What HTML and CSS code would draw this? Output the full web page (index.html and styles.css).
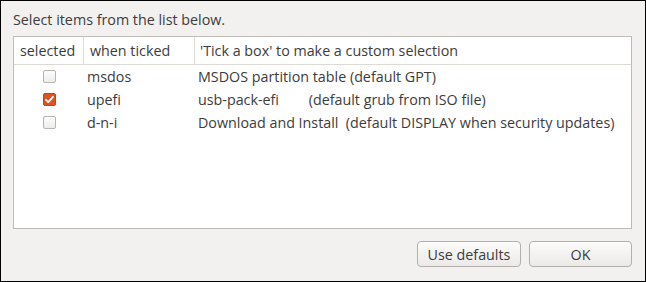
FILE: index.html
```html
<!DOCTYPE html>
<html lang="en">
<head>
  <meta charset="UTF-8">
  <title>Select items</title>
  <link rel="stylesheet" href="styles.css">
</head>
<body>
  <div class="dialog">
    <p class="dialog-prompt">Select items from the list below.</p>

    <div class="item-list">
      <div class="item-head">
        <span>selected</span>
        <span>when ticked</span>
        <span>'Tick a box' to make a custom selection</span>
      </div>
      <div class="item-row">
        <span class="item-check"><input type="checkbox" class="check"></span>
        <span>msdos</span>
        <span>MSDOS partition table (default GPT)</span>
      </div>
      <div class="item-row">
        <span class="item-check"><input type="checkbox" class="check" checked></span>
        <span>upefi</span>
        <span>usb-pack-efi&nbsp;&nbsp;&nbsp;&nbsp;&nbsp;&nbsp;&nbsp;&nbsp;(default grub from ISO file)</span>
      </div>
      <div class="item-row">
        <span class="item-check"><input type="checkbox" class="check"></span>
        <span>d-n-i</span>
        <span>Download and Install&nbsp;&nbsp;(default DISPLAY when security updates)</span>
      </div>
    </div>

    <div class="dialog-actions">
      <button class="btn btn-defaults">Use defaults</button>
      <button class="btn btn-ok">OK</button>
    </div>
  </div>
</body>
</html>
```

FILE: styles.css
```css
/* === Reset === */
*, *::before, *::after { box-sizing: border-box; }
body {
  margin: 0;
  font-family: "Open Sans", "DejaVu Sans", sans-serif;
  font-size: 14.3px;
  color: #3c3c3c;
}

/* === Dialog === */
.dialog {
  --dlg-bg: #f2f1f0;
  --dlg-line: #bfbbb7;

  background: var(--dlg-bg);
  border: 1px solid #000;
  display: flex;
  flex-direction: column;
  height: 282px;
  padding: 0 13px 14px 12px;
  width: 646px;
}
.dialog-prompt {
  height: 28px;
  line-height: 18px;
  margin: 0 0 7px;
  padding-top: 10px;
}

/* === List === */
.item-list {
  background: #fff;
  border: 1px solid var(--dlg-line);
  flex: 1;
}
.item-head, .item-row {
  display: grid;
  grid-template-columns: 70px 111px 1fr;
  white-space: nowrap;
}
.item-head {
  border-bottom: 1px solid #dddad6;
  height: 28px;
}
.item-head span {
  line-height: 27px;
  padding-left: 6px;
}
.item-head span:nth-child(3) { padding-left: 5px; }
.item-head span:not(:last-child) { border-right: 1px solid #dddad6; }
.item-row { height: 23px; line-height: 23px; }
.item-row span { padding-left: 3px; }
.item-row .item-check {
  align-items: center;
  display: flex;
  justify-content: center;
  padding: 0;
}

/* === Checkbox === */
.check {
  appearance: none;
  background: linear-gradient(#fdfdfd, #eeedec);
  border: 1px solid #b8b4b0;
  border-radius: 2px;
  height: 13px;
  margin: 0 0 0 1px;
  width: 13px;
}
.check:checked {
  background: #df5320 url("data:image/svg+xml,%3Csvg xmlns='http://www.w3.org/2000/svg' viewBox='0 0 13 13'%3E%3Cpath d='M3 6.8l2.3 2.3L10 3.9' fill='none' stroke='%23fff' stroke-width='1.8' stroke-linecap='round' stroke-linejoin='round'/%3E%3C/svg%3E") center / 13px 13px no-repeat;
  border-color: #b9461d;
}

/* === Buttons === */
.dialog-actions {
  display: flex;
  gap: 8px;
  justify-content: flex-end;
  margin-top: 12px;
}
.btn {
  background: linear-gradient(#fbfbfa, #eceae8);
  border: 1px solid #b4afaa;
  border-radius: 4px;
  color: inherit;
  font: inherit;
  height: 26px;
  padding: 0;
}
.btn-defaults { width: 104px; }
.btn-ok { width: 103px; }
```
